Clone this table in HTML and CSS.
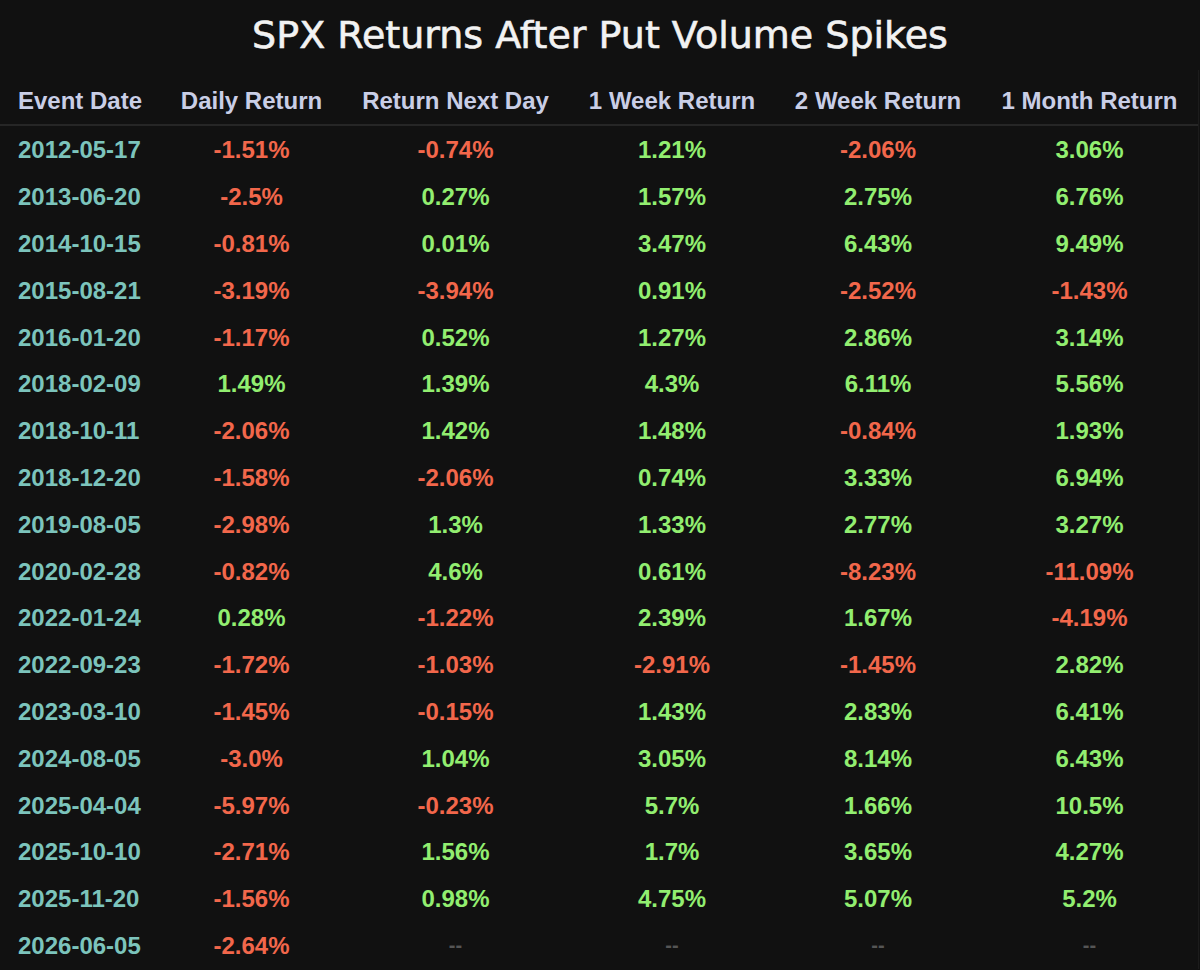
FILE: index.html
```html
<!DOCTYPE html>
<html>
<head>
<meta charset="utf-8">
<link rel="stylesheet" href="styles.css">
</head>
<body>
<div class="page">
  <h1 class="title">SPX Returns After Put Volume Spikes</h1>
  <div class="table">
    <div class="row head">
      <div class="c date">Event Date</div>
      <div class="c">Daily Return</div>
      <div class="c">Return Next Day</div>
      <div class="c">1 Week Return</div>
      <div class="c">2 Week Return</div>
      <div class="c">1 Month Return</div>
    </div>
    <div class="row"><div class="c date">2012-05-17</div><div class="c neg">-1.51%</div><div class="c neg">-0.74%</div><div class="c pos">1.21%</div><div class="c neg">-2.06%</div><div class="c pos">3.06%</div></div>
    <div class="row"><div class="c date">2013-06-20</div><div class="c neg">-2.5%</div><div class="c pos">0.27%</div><div class="c pos">1.57%</div><div class="c pos">2.75%</div><div class="c pos">6.76%</div></div>
    <div class="row"><div class="c date">2014-10-15</div><div class="c neg">-0.81%</div><div class="c pos">0.01%</div><div class="c pos">3.47%</div><div class="c pos">6.43%</div><div class="c pos">9.49%</div></div>
    <div class="row"><div class="c date">2015-08-21</div><div class="c neg">-3.19%</div><div class="c neg">-3.94%</div><div class="c pos">0.91%</div><div class="c neg">-2.52%</div><div class="c neg">-1.43%</div></div>
    <div class="row"><div class="c date">2016-01-20</div><div class="c neg">-1.17%</div><div class="c pos">0.52%</div><div class="c pos">1.27%</div><div class="c pos">2.86%</div><div class="c pos">3.14%</div></div>
    <div class="row"><div class="c date">2018-02-09</div><div class="c pos">1.49%</div><div class="c pos">1.39%</div><div class="c pos">4.3%</div><div class="c pos">6.11%</div><div class="c pos">5.56%</div></div>
    <div class="row"><div class="c date">2018-10-11</div><div class="c neg">-2.06%</div><div class="c pos">1.42%</div><div class="c pos">1.48%</div><div class="c neg">-0.84%</div><div class="c pos">1.93%</div></div>
    <div class="row"><div class="c date">2018-12-20</div><div class="c neg">-1.58%</div><div class="c neg">-2.06%</div><div class="c pos">0.74%</div><div class="c pos">3.33%</div><div class="c pos">6.94%</div></div>
    <div class="row"><div class="c date">2019-08-05</div><div class="c neg">-2.98%</div><div class="c pos">1.3%</div><div class="c pos">1.33%</div><div class="c pos">2.77%</div><div class="c pos">3.27%</div></div>
    <div class="row"><div class="c date">2020-02-28</div><div class="c neg">-0.82%</div><div class="c pos">4.6%</div><div class="c pos">0.61%</div><div class="c neg">-8.23%</div><div class="c neg">-11.09%</div></div>
    <div class="row"><div class="c date">2022-01-24</div><div class="c pos">0.28%</div><div class="c neg">-1.22%</div><div class="c pos">2.39%</div><div class="c pos">1.67%</div><div class="c neg">-4.19%</div></div>
    <div class="row"><div class="c date">2022-09-23</div><div class="c neg">-1.72%</div><div class="c neg">-1.03%</div><div class="c neg">-2.91%</div><div class="c neg">-1.45%</div><div class="c pos">2.82%</div></div>
    <div class="row"><div class="c date">2023-03-10</div><div class="c neg">-1.45%</div><div class="c neg">-0.15%</div><div class="c pos">1.43%</div><div class="c pos">2.83%</div><div class="c pos">6.41%</div></div>
    <div class="row"><div class="c date">2024-08-05</div><div class="c neg">-3.0%</div><div class="c pos">1.04%</div><div class="c pos">3.05%</div><div class="c pos">8.14%</div><div class="c pos">6.43%</div></div>
    <div class="row"><div class="c date">2025-04-04</div><div class="c neg">-5.97%</div><div class="c neg">-0.23%</div><div class="c pos">5.7%</div><div class="c pos">1.66%</div><div class="c pos">10.5%</div></div>
    <div class="row"><div class="c date">2025-10-10</div><div class="c neg">-2.71%</div><div class="c pos">1.56%</div><div class="c pos">1.7%</div><div class="c pos">3.65%</div><div class="c pos">4.27%</div></div>
    <div class="row"><div class="c date">2025-11-20</div><div class="c neg">-1.56%</div><div class="c pos">0.98%</div><div class="c pos">4.75%</div><div class="c pos">5.07%</div><div class="c pos">5.2%</div></div>
    <div class="row"><div class="c date">2026-06-05</div><div class="c neg">-2.64%</div><div class="c na">--</div><div class="c na">--</div><div class="c na">--</div><div class="c na">--</div></div>
  </div>
</div>
</body>
</html>
```

FILE: styles.css
```css
html, body {
  margin: 0;
  padding: 0;
  background: #111111;
}
.page {
  width: 1200px;
  height: 970px;
  overflow: hidden;
  background: #111111;
  font-family: "Liberation Sans", Arial, sans-serif;
}
.title {
  margin: 0;
  height: 70px;
  line-height: 70px;
  text-align: center;
  color: #f2f2f2;
  font-family: "DejaVu Sans", sans-serif;
  font-weight: normal;
  font-size: 38px;
  -webkit-text-stroke: 0.6px #f2f2f2;
}
.table {
  width: 1198px;
  border-right: 1px solid #1c1c1c;
}
.row {
  display: grid;
  grid-template-columns: 161px 181px 227px 206px 206px 217px;
  height: 46.8px;
  align-items: center;
  font-weight: bold;
  font-size: 24px;
}
.row.head {
  box-sizing: border-box;
  height: 56px;
  padding-top: 8px;
  border-bottom: 2px solid #262626;
  color: #c9cee6;
}
.c {
  text-align: center;
  white-space: nowrap;
}
.c.date {
  text-align: left;
  padding-left: 18px;
}
.row .date { color: #7cc4bc; }
.row.head .date { color: #c9cee6; }
.neg { color: #f2674b; }
.pos { color: #92ee70; }
.na { color: #555555; font-size: 20px; }
.table .row:nth-child(2) { margin-top: 1px; }
```
